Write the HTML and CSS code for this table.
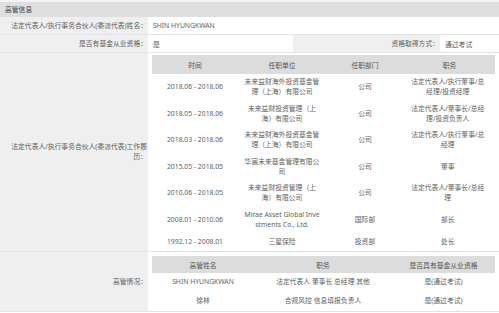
FILE: index.html
```html
<!DOCTYPE html>
<html lang="zh-CN">
<head>
<meta charset="utf-8">
<link rel="stylesheet" href="styles.css">
</head>
<body>
<div class="panel">
  <div class="title">高管信息</div>
  <div class="grid">
    <div class="label">法定代表人/执行事务合伙人(委派代表)姓名：</div>
    <div class="value span3">SHIN HYUNGKWAN</div>

    <div class="label">是否有基金从业资格：</div>
    <div class="value">是</div>
    <div class="label">资格取得方式：</div>
    <div class="value">通过考试</div>

    <div class="label">法定代表人/执行事务合伙人(委派代表)工作履历：</div>
    <div class="value span3 nest-wrap">
      <table class="nest history">
        <colgroup><col class="c1"><col class="c2"><col class="c3"><col class="c4"></colgroup>
        <thead><tr><th>时间</th><th>任职单位</th><th>任职部门</th><th>职务</th></tr></thead>
        <tbody>
          <tr><td>2018.06 - 2018.06</td><td>未来益财海外投资基金管理（上海）有限公司</td><td>公司</td><td>法定代表人/执行董事/总经理/投资经理</td></tr>
          <tr><td>2018.05 - 2018.06</td><td>未来益财投资管理（上海）有限公司</td><td>公司</td><td>法定代表人/董事长/总经理/投资负责人</td></tr>
          <tr><td>2018.03 - 2018.06</td><td>未来益财海外投资基金管理（上海）有限公司</td><td>公司</td><td>法定代表人/执行董事/总经理</td></tr>
          <tr><td>2015.05 - 2018.05</td><td>华宸未来基金管理有限公司</td><td>公司</td><td>董事</td></tr>
          <tr><td>2010.06 - 2018.05</td><td>未来益财投资管理（上海）有限公司</td><td>公司</td><td>法定代表人/董事长/总经理</td></tr>
          <tr><td>2008.01 - 2010.06</td><td>Mirae Asset Global Investments Co., Ltd.</td><td>国际部</td><td>部长</td></tr>
          <tr class="last"><td>1992.12 - 2008.01</td><td>三星保险</td><td>投资部</td><td>处长</td></tr>
        </tbody>
      </table>
    </div>

    <div class="label">高管情况：</div>
    <div class="value span3 nest-wrap">
      <table class="nest mgmt">
        <colgroup><col class="m1"><col class="m2"><col class="m3"></colgroup>
        <thead><tr><th>高管姓名</th><th>职务</th><th>是否具有基金从业资格</th></tr></thead>
        <tbody>
          <tr><td>SHIN HYUNGKWAN</td><td>法定代表人 董事长 总经理 其他</td><td>是(通过考试)</td></tr>
          <tr><td>徐林</td><td>合规风控 信息填报负责人</td><td>是(通过考试)</td></tr>
        </tbody>
      </table>
    </div>
  </div>
</div>
</body>
</html>
```
FILE: styles.css
```css
html, body {
  margin: 0;
  padding: 0;
  background: #ffffff;
}
.panel {
  width: 499px;
  font-family: "Noto Sans", "Noto Sans CJK SC", sans-serif;
  font-size: 6.8px;
  color: #5e5e5e;
}
.title {
  border-top: 2px solid #f4f4f4;
  height: 15px;
  line-height: 15px;
  background: #dfdfdf;
  padding-left: 5px;
  color: #3c3c3c;
}
.grid {
  display: grid;
  grid-template-columns: 148px 145px 147px 1fr;
}
.label,
.value {
  border-bottom: 1px solid #e3e3e3;
  display: flex;
  align-items: center;
  box-sizing: border-box;
}
.label {
  background: #efefef;
  justify-content: flex-end;
  text-align: right;
  padding: 0 1px 0 4px;
  line-height: 10px;
  min-height: 18px;
}
.value {
  background: #ffffff;
  padding-left: 5px;
  min-height: 18px;
}
.span3 {
  grid-column: span 3;
}
.nest-wrap {
  padding: 2px 4px 0 4px;
  align-items: flex-start;
}
.nest {
  width: 343px;
  border-collapse: collapse;
  table-layout: fixed;
  text-align: center;
}
.nest th {
  background: #dcdcdc;
  font-weight: normal;
  height: 19px;
  padding: 0;
  color: #555;
}
.nest td {
  padding: 3px 4px;
  line-height: 10.25px;
  vertical-align: middle;
  word-break: break-all;
}
.history .c1 { width: 86px; }
.history .c2 { width: 88px; }
.history .c3 { width: 78px; }
.history .c4 { width: 91px; }
.history td:nth-child(2) {
  padding-left: 5.5px;
  padding-right: 5.5px;
}
.history td:nth-child(4) {
  padding-left: 6.5px;
  padding-right: 10px;
}
.history tr.last td {
  height: 18px;
  padding-top: 0;
  padding-bottom: 0;
}
.mgmt {
  margin-top: 2px;
}
.mgmt th {
  height: 17px;
}
.mgmt td {
  height: 19px;
  padding: 0 2px;
}
.mgmt .m1 { width: 102px; }
.mgmt .m2 { width: 138px; }
.mgmt .m3 { width: 103px; }
```
